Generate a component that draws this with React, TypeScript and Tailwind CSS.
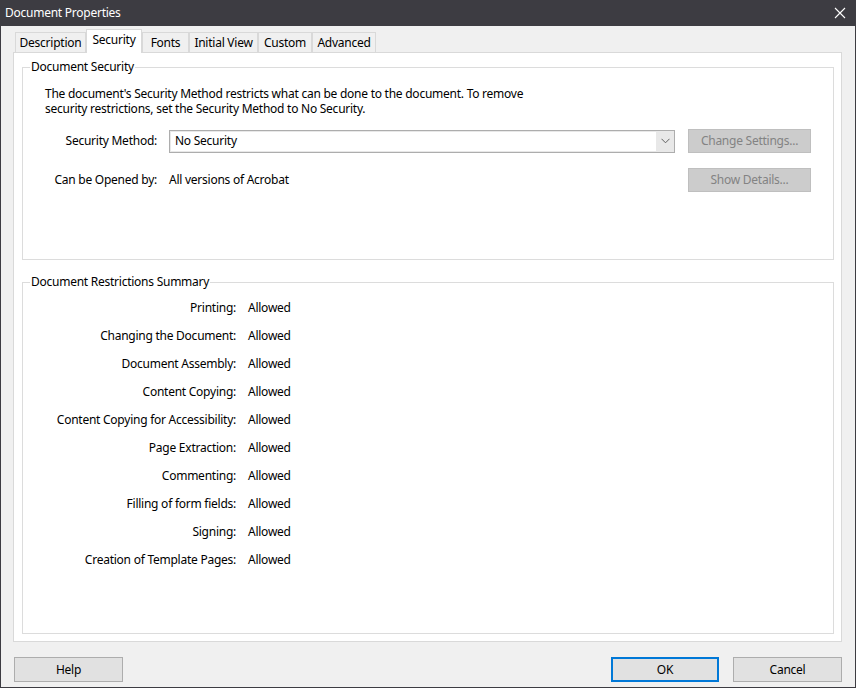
import React from "react";

const font = { fontFamily: '"Noto Sans", "Segoe UI", sans-serif' };

const tabs = [
  { name: "Description", w: "w-[71px]" },
  { name: "Security", w: "w-[56px]", active: true },
  { name: "Fonts", w: "w-[47px]" },
  { name: "Initial View", w: "w-[69px]" },
  { name: "Custom", w: "w-[54px]" },
  { name: "Advanced", w: "w-[64px]" },
];

const restrictions = [
  "Printing:",
  "Changing the Document:",
  "Document Assembly:",
  "Content Copying:",
  "Content Copying for Accessibility:",
  "Page Extraction:",
  "Commenting:",
  "Filling of form fields:",
  "Signing:",
  "Creation of Template Pages:",
];

export default function App() {
  return (
    <div
      className="w-[856px] h-[688px] flex flex-col bg-[#f0f0f0] border-x border-b border-[#3d3c42] text-[12px] text-black tracking-[-0.25px] overflow-hidden"
      style={font}
    >
      {/* Title bar */}
      <div className="h-[26px] shrink-0 -mx-px bg-[#3d3c42] flex items-center justify-between pl-[5px] pr-[10px] text-white">
        <span className="leading-none">Document Properties</span>
        <svg width="12" height="12" viewBox="0 0 12 12">
          <path d="M1 1 L11 11 M11 1 L1 11" stroke="#ffffff" strokeWidth="1.1" fill="none" />
        </svg>
      </div>

      <div className="flex-1 flex flex-col pl-[12px] pr-[13px]">
        {/* Tabs */}
        <div className="mt-[3px] ml-[2px] flex items-end">
          {tabs.map((t) =>
            t.active ? (
              <div
                key={t.name}
                className={`${t.w} h-[24px] -mb-px relative z-10 bg-white border-x border-t border-[#d9d9d9] flex items-start justify-center pt-[2px] leading-[16px]`}
              >
                {t.name}
              </div>
            ) : (
              <div
                key={t.name}
                className={`${t.w} h-[20px] bg-[#f0f0f0] border-x border-t border-[#d9d9d9] flex items-center justify-center leading-[16px]`}
              >
                {t.name}
              </div>
            )
          )}
        </div>

        {/* Panel */}
        <div className="h-[590px] bg-white border border-[#d9d9d9] flex flex-col pl-[8px] pr-[7px] pb-[7px]">
          {/* Document Security */}
          <fieldset className="mt-[6px] h-[201px] border border-[#dcdcdc] pl-[7px] pr-[22px]">
            <legend className="px-px leading-[16px]">Document Security</legend>
            <div className="pl-[15px] pt-[11px] leading-[15px]">
              The document's Security Method restricts what can be done to the document. To remove
              <br />
              security restrictions, set the Security Method to No Security.
            </div>
            <div className="mt-[13px] -ml-[7px] flex items-center">
              <span className="w-[134px] text-right">Security Method:</span>
              <div className="ml-[12px] w-[506px] h-[23px] border border-[#adadad] bg-[#e8e8e8] flex items-stretch">
                <div className="flex-1 bg-white my-px ml-px flex items-center pl-[4px]">No Security</div>
                <div className="w-[18px] flex items-center justify-center">
                  <svg width="9" height="6" viewBox="0 0 9 6">
                    <path d="M0.5 0.8 L4.5 4.8 L8.5 0.8" stroke="#606060" strokeWidth="1" fill="none" />
                  </svg>
                </div>
              </div>
              <button className="ml-[13px] w-[123px] h-[24px] bg-[#cccccc] border border-[#bfbfbf] text-[#838383]">
                Change Settings...
              </button>
            </div>
            <div className="mt-[15px] -ml-[7px] flex items-center">
              <span className="w-[134px] text-right">Can be Opened by:</span>
              <span className="ml-[12px] flex-1">All versions of Acrobat</span>
              <button className="w-[123px] h-[24px] bg-[#cccccc] border border-[#bfbfbf] text-[#838383]">
                Show Details...
              </button>
            </div>
          </fieldset>

          {/* Restrictions */}
          <fieldset className="mt-[14px] flex-1 border border-[#dcdcdc] pl-[7px]">
            <legend className="px-px leading-[16px]">Document Restrictions Summary</legend>
            <div className="pt-[10px] flex flex-col gap-[12px]">
              {restrictions.map((r) => (
                <div key={r} className="flex items-center h-[16px] leading-[16px]">
                  <span className="w-[206px] text-right">{r}</span>
                  <span className="ml-[12px]">Allowed</span>
                </div>
              ))}
            </div>
          </fieldset>
        </div>

        {/* Footer buttons */}
        <div className="mt-[15px] flex items-center">
          <button className="ml-[1px] w-[109px] h-[25px] bg-[#e1e1e1] border border-[#adadad]">Help</button>
          <div className="flex-1" />
          <button className="w-[108px] h-[25px] bg-[#e1e1e1] border-2 border-[#0078d7]">OK</button>
          <button className="ml-[14px] w-[109px] h-[25px] bg-[#e1e1e1] border border-[#adadad]">Cancel</button>
        </div>
      </div>
    </div>
  );
}
